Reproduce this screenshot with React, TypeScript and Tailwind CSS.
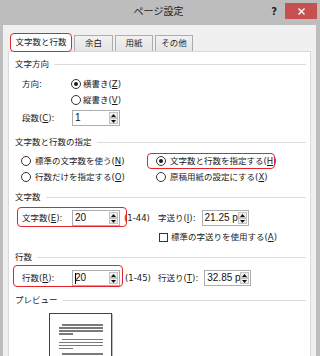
import React from 'react';

const Key = ({ k }: { k: string }) => (
  <>
    (<span className="underline underline-offset-[1px] decoration-[0.5px]">{k}</span>)
  </>
);

const Radio = ({ checked }: { checked?: boolean }) => (
  <span className="w-[10px] h-[10px] rounded-full border border-[#333] bg-white flex items-center justify-center shrink-0">
    {checked && <span className="w-[4px] h-[4px] rounded-full bg-[#1a1a1a]" />}
  </span>
);

const Arrow = ({ up }: { up?: boolean }) => (
  <span className="flex-1 flex items-center justify-center border border-[#c4c4c4] bg-[#eeeeee]">
    <svg width="5" height="3" viewBox="0 0 5 3">
      <path d={up ? 'M0 3 L2.5 0 L5 3 Z' : 'M0 0 L2.5 3 L5 0 Z'} fill="#111" />
    </svg>
  </span>
);

const Spin = ({ value, width, cursor }: { value: string; width: string; cursor?: boolean }) => (
  <div className={`flex h-[16px] border border-[#abadb3] bg-white ${width}`}>
    <div className="flex-1 flex items-center overflow-hidden whitespace-nowrap pl-[2px] font-['Liberation_Sans',sans-serif] text-[10px] text-[#111]">
      {cursor && <span className="w-px h-[11px] bg-black mr-[-1px]" />}
      {value}
    </div>
    <div className="w-[10px] flex flex-col py-px pr-[1px]">
      <Arrow up />
      <Arrow />
    </div>
  </div>
);

const Group = ({ title, className = '' }: { title: string; className?: string }) => (
  <div className={`flex items-center h-[16px] pl-[6px] pr-[4px] gap-[5px] ${className}`}>
    <span>{title}</span>
    <div className="flex-1 h-px bg-[#dcdcdc]" />
  </div>
);

const PreviewLines = ({ indent }: { indent?: boolean }) => (
  <div className="flex flex-col gap-[1.5px]">
    <div className="h-[1.5px] bg-[#7a7a7a] ml-[12px] mr-[8px]" />
    <div className="h-[1.5px] bg-[#7a7a7a] ml-[9px] mr-[8px]" />
    <div className="h-[1.5px] bg-[#7a7a7a] ml-[9px] mr-[8px]" />
    {indent && <div className="h-[1.5px] bg-[#7a7a7a] ml-[9px] w-[14px]" />}
  </div>
);

export default function App() {
  return (
    <div className="w-[320px] h-[356px] overflow-hidden bg-[#bdbdbd] flex flex-col font-['DejaVu_Sans','Noto_Sans_CJK_JP',sans-serif] text-[8.5px] leading-none text-[#1a1a1a] whitespace-nowrap">
      {/* title bar */}
      <div className="h-[25px] shrink-0 flex">
        <div className="flex-1" />
        <div className="flex items-center text-[10px] text-[#222] pb-[1px]">ページ設定</div>
        <div className="flex-1 flex justify-end items-start pr-[3px] pt-[3px]">
          <span className="text-[10px] font-bold text-[#222] mt-[4px] mr-[8px]">?</span>
          <div className="w-[32px] h-[16px] bg-[#c75050] flex items-center justify-center">
            <svg width="7" height="7" viewBox="0 0 7 7">
              <path d="M0.5 0.5 L6.5 6.5 M6.5 0.5 L0.5 6.5" stroke="#fff" strokeWidth="1.4" />
            </svg>
          </div>
        </div>
      </div>

      {/* body */}
      <div className="flex-1 ml-[3px] mr-[4px] bg-[#f0f0f0] pt-[8px] flex flex-col">
        {/* tabs */}
        <div className="h-[18px] flex items-end gap-[2px] pl-[7px]">
          <div className="relative z-10 w-[62px] h-[19px] -mb-[1px] bg-white border-[1.5px] border-[#e5232b] rounded-[4px] flex items-center justify-center">
            文字数と行数
          </div>
          <div className="w-[39px] h-[16px] border border-b-0 border-[#acacac] bg-gradient-to-b from-[#f2f2f2] to-[#e3e3e3] flex items-center justify-center">
            余白
          </div>
          <div className="w-[38px] h-[16px] border border-b-0 border-[#acacac] bg-gradient-to-b from-[#f2f2f2] to-[#e3e3e3] flex items-center justify-center">
            用紙
          </div>
          <div className="w-[38px] h-[16px] border border-b-0 border-[#acacac] bg-gradient-to-b from-[#f2f2f2] to-[#e3e3e3] flex items-center justify-center">
            その他
          </div>
        </div>

        {/* panel */}
        <div className="flex-1 mx-[5px] border border-[#d9d9d9] bg-white flex flex-col">
          <Group title="文字方向" className="mt-[4px]" />
          <div className="mt-[4px] h-[16px] flex items-center pl-[13px]">
            <span className="w-[49px]">方向:</span>
            <Radio checked />
            <span className="ml-[2px]">
              横書き<Key k="Z" />
            </span>
          </div>
          <div className="h-[16px] flex items-center pl-[62px]">
            <Radio />
            <span className="ml-[2px]">
              縦書き<Key k="V" />
            </span>
          </div>
          <div className="mt-[1px] h-[18px] flex items-center pl-[13px]">
            <span className="w-[50px]">
              段数<Key k="C" />:
            </span>
            <Spin value="1" width="w-[48px]" />
          </div>

          <Group title="文字数と行数の指定" className="mt-[7px]" />
          <div className="mt-[3px] h-[16px] flex items-center pl-[12px]">
            <div className="w-[126px] flex items-center">
              <Radio />
              <span className="ml-[4px]">
                標準の文字数を使う<Key k="N" />
              </span>
            </div>
            <div className="relative w-[128px] h-[16px] flex items-center pl-[9px]">
              <span className="absolute inset-0 border-[1.5px] border-[#e5232b] rounded-[4px]" />
              <Radio checked />
              <span className="ml-[4px]">
                文字数と行数を指定する<Key k="H" />
              </span>
            </div>
          </div>
          <div className="h-[16px] flex items-center pl-[12px]">
            <div className="w-[126px] flex items-center">
              <Radio />
              <span className="ml-[4px]">
                行数だけを指定する<Key k="O" />
              </span>
            </div>
            <div className="flex items-center pl-[9px]">
              <Radio />
              <span className="ml-[4px]">
                原稿用紙の設定にする<Key k="X" />
              </span>
            </div>
          </div>

          <Group title="文字数" className="mt-[4px]" />
          <div className="mt-[3px] h-[20px] flex items-center pl-[13px]">
            <div className="w-[136px] flex items-center">
              <div className="relative flex items-center">
                <span className="absolute left-[-5px] right-[-7px] top-[-3px] bottom-[-1px] border-[1.5px] border-[#e5232b] rounded-[4px]" />
                <span className="w-[50px]">
                  文字数<Key k="E" />:
                </span>
                <Spin value="20" width="w-[48px]" />
              </div>
              <span className="ml-[4px]">(1-44)</span>
            </div>
            <span>
              字送り<Key k="I" />:
            </span>
            <div className="ml-[6px]">
              <Spin value="21.25 p" width="w-[47px]" />
            </div>
          </div>
          <div className="mt-[1px] h-[16px] flex items-center pl-[150px]">
            <span className="w-[9px] h-[9px] border border-[#333] bg-white shrink-0" />
            <span className="ml-[3px]">
              標準の字送りを使用する<Key k="A" />
            </span>
          </div>

          <Group title="行数" className="mt-[4px]" />
          <div className="mt-[2px] h-[22px] flex items-center pl-[13px]">
            <div className="w-[136px] flex items-center">
              <div className="relative flex items-center">
                <span className="absolute left-[-9px] right-[-3px] top-[-5px] bottom-[-1px] border-[1.5px] border-[#e5232b] rounded-[4px]" />
                <span className="w-[50px]">
                  行数<Key k="R" />:
                </span>
                <Spin value="20" width="w-[48px]" cursor />
              </div>
              <span className="ml-[5px]">(1-45)</span>
            </div>
            <span>
              行送り<Key k="T" />:
            </span>
            <div className="ml-[6px]">
              <Spin value="32.85 p" width="w-[47px]" />
            </div>
          </div>

          <Group title="プレビュー" className="mt-[3px]" />
          <div className="mt-[5px] flex-1 pl-[40px]">
            <div className="w-[63px] h-full border border-[#444] bg-white shadow-[1px_1px_0_#bbb] pt-[10px] flex flex-col gap-[4px]">
              <PreviewLines indent />
              <PreviewLines indent />
              <PreviewLines />
            </div>
          </div>
        </div>
      </div>
    </div>
  );
}
